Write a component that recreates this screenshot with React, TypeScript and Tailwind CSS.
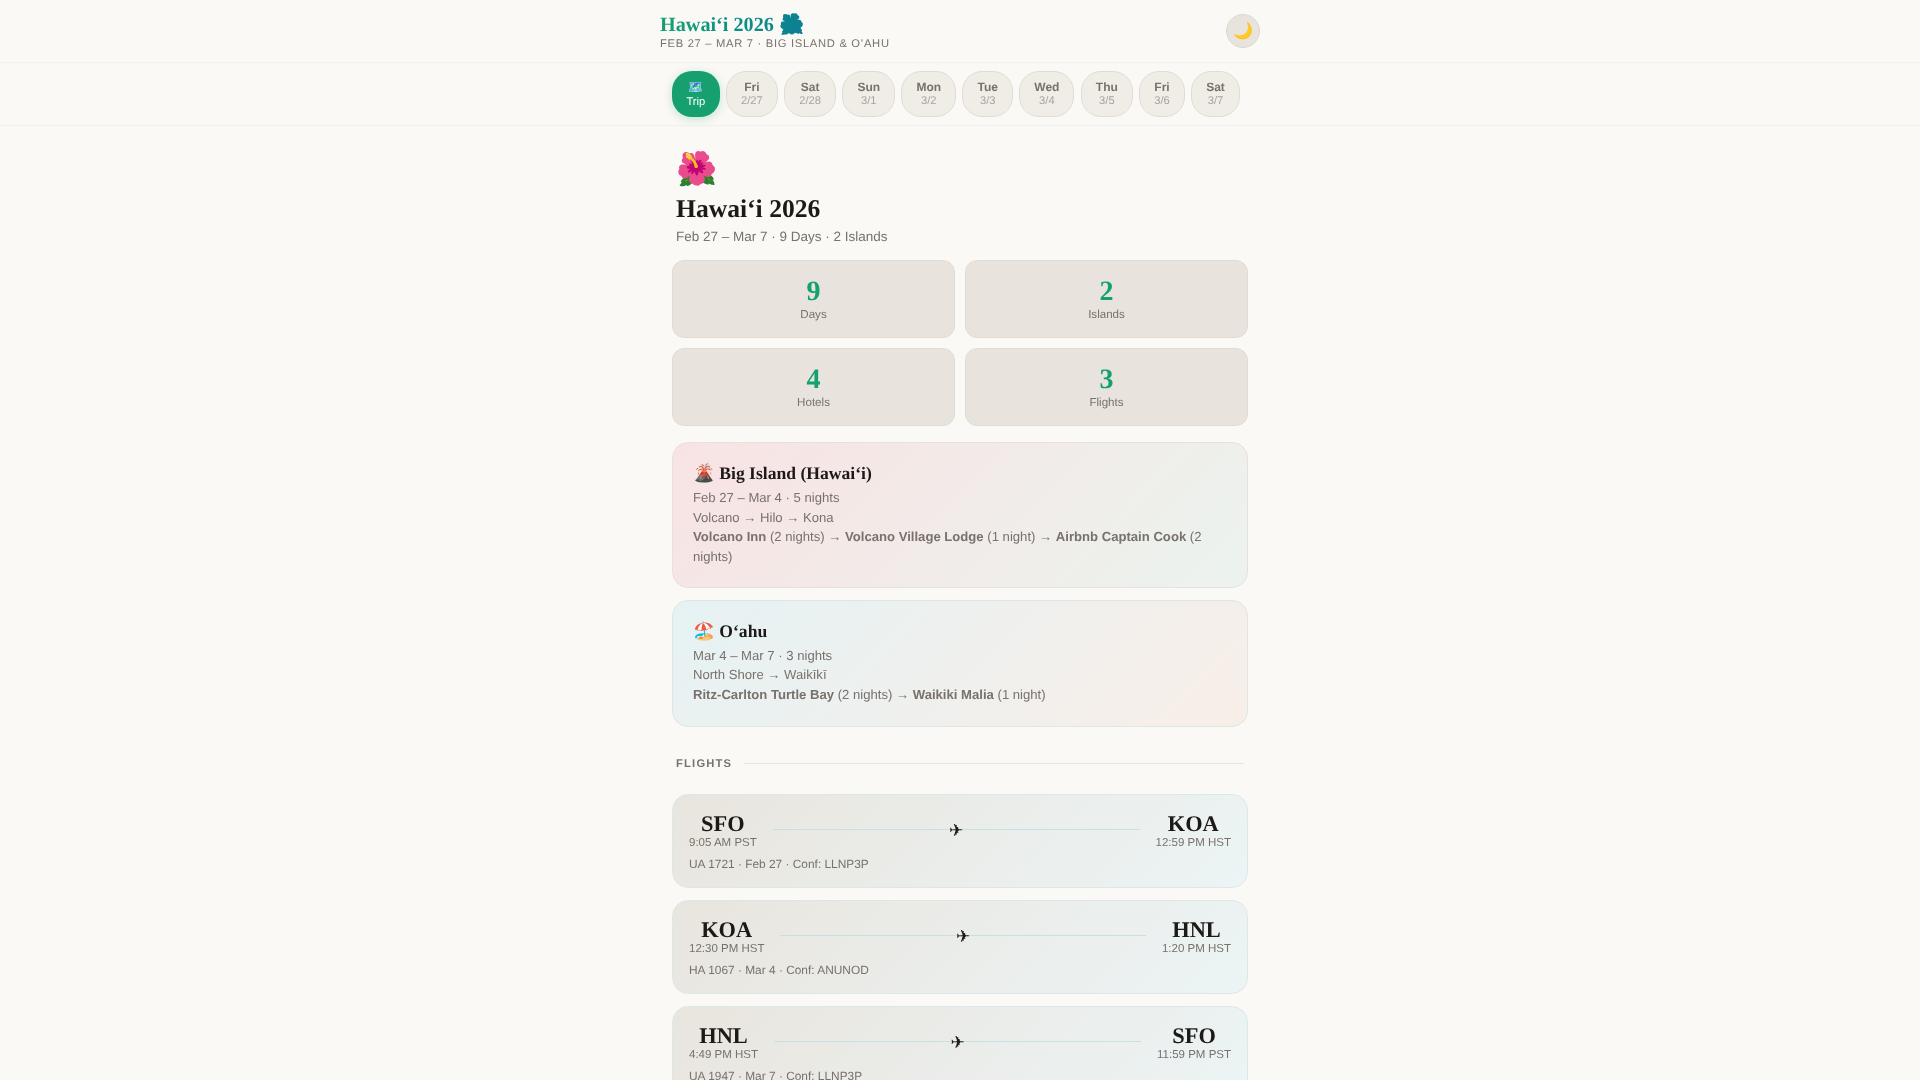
import React from 'react';

const days = [
  { name: 'Fri', date: '2/27' },
  { name: 'Sat', date: '2/28' },
  { name: 'Sun', date: '3/1' },
  { name: 'Mon', date: '3/2' },
  { name: 'Tue', date: '3/3' },
  { name: 'Wed', date: '3/4' },
  { name: 'Thu', date: '3/5' },
  { name: 'Fri', date: '3/6' },
  { name: 'Sat', date: '3/7' },
];

const stats = [
  { value: '9', label: 'Days' },
  { value: '2', label: 'Islands' },
  { value: '4', label: 'Hotels' },
  { value: '3', label: 'Flights' },
];

const flights = [
  { from: 'SFO', fromTime: '9:05 AM PST', to: 'KOA', toTime: '12:59 PM HST', info: 'UA 1721 · Feb 27 · Conf: LLNP3P' },
  { from: 'KOA', fromTime: '12:30 PM HST', to: 'HNL', toTime: '1:20 PM HST', info: 'HA 1067 · Mar 4 · Conf: ANUNOD' },
  { from: 'HNL', fromTime: '4:49 PM HST', to: 'SFO', toTime: '11:59 PM PST', info: 'UA 1947 · Mar 7 · Conf: LLNP3P' },
];

const serif = "font-['Liberation_Serif',serif]";

const App = (): React.JSX.Element => {
  return (
    <div className="h-[1080px] overflow-hidden bg-[#faf9f5] font-['Liberation_Sans',sans-serif] text-[#1c1917] [text-rendering:geometricPrecision]">
      <div className="[will-change:transform]">
        <header className="border-b border-[#eff2ec]">
          <div className="mx-auto flex h-[62px] w-[600px] items-center justify-between">
            <div>
              <h1 className={`${serif} w-fit bg-gradient-to-r from-[#16a070] to-[#0e7f94] bg-clip-text text-[20.2px] leading-[26px] font-bold text-transparent`}>
                Hawaiʻi 2026 🌺
              </h1>
              <p className="text-[11.2px] leading-[13px] tracking-[0.7px] text-[#78716c]">
                FEB 27 – MAR 7 · BIG ISLAND &amp; OʻAHU
              </p>
            </div>
            <button className="flex h-[34px] w-[34px] items-center justify-center rounded-full border border-[#dcd8d0] bg-[#e8e4dd] text-[16px]">
              🌙
            </button>
          </div>
        </header>

        <nav className="border-b border-[#eff2ec]">
          <div className="mx-auto flex h-[62px] w-[600px] items-center gap-[6.4px] px-3">
            <div className="flex h-[46px] flex-col items-center justify-center rounded-[20px] bg-[#16a070] px-[14.4px] text-white shadow-[0_2px_10px_rgba(22,160,112,0.25)]">
              <span className="text-[12px] leading-[15px]">🗺️</span>
              <span className="text-[11.2px] leading-[14px]">Trip</span>
            </div>
            {days.map((day) => (
              <div
                key={day.date}
                className="flex h-[46px] flex-col items-center justify-center rounded-[20px] border border-[#e0dcd4] bg-[#f0ede7] px-[14px]"
              >
                <span className="text-[12px] leading-[15px] font-bold text-[#78716c]">{day.name}</span>
                <span className="text-[11.2px] leading-[13px] text-[#a8a29e]">{day.date}</span>
              </div>
            ))}
          </div>
        </nav>

        <main className="mx-auto w-[600px] px-3">
          <section className="mt-[24px] px-1">
            <div className="text-[33px] leading-[38px]">🌺</div>
            <h2 className={`${serif} mt-[5px] text-[25.6px] leading-[32px] font-bold`}>Hawaiʻi 2026</h2>
            <p className="mt-[2px] text-[13.5px] leading-[20px] text-[#78716c]">Feb 27 – Mar 7 · 9 Days · 2 Islands</p>
          </section>

          <section className="mt-[13px] grid grid-cols-2 gap-[10px]">
            {stats.map((stat) => (
              <div key={stat.label} className="flex h-[78px] flex-col items-center justify-center rounded-[12px] border border-[#e0dcd4] bg-[#e8e4dd]">
                <div className={`${serif} text-[28px] leading-[32px] font-bold text-[#16a070]`}>{stat.value}</div>
                <div className="text-[11.6px] leading-[14px] text-[#78716c]">{stat.label}</div>
              </div>
            ))}
          </section>

          <section className="mt-4 flex flex-col gap-3">
            <div className="rounded-[16px] border border-[#e8e0dc] bg-[linear-gradient(135deg,#f8e3e3,#ebf3ee)] px-5 pt-[18px] pb-[20px]">
              <h3 className={`${serif} text-[17.6px] leading-[24px] font-bold`}>🌋 Big Island (Hawaiʻi)</h3>
              <div className="mt-[3px] text-[13.12px] leading-[19.68px] text-[#78716c]">
                <p>Feb 27 – Mar 4 · 5 nights</p>
                <p>Volcano → Hilo → Kona</p>
                <p>
                  <strong>Volcano Inn</strong> (2 nights) → <strong>Volcano Village Lodge</strong> (1 night) → <strong>Airbnb Captain Cook</strong> (2 nights)
                </p>
              </div>
            </div>
            <div className="rounded-[16px] border border-[#dfe5e4] bg-[linear-gradient(135deg,#e6f2f4,#f8eee8)] px-5 pt-[18px] pb-[21px]">
              <h3 className={`${serif} text-[17.6px] leading-[24px] font-bold`}>🏖️ Oʻahu</h3>
              <div className="mt-[3px] text-[13.12px] leading-[19.68px] text-[#78716c]">
                <p>Mar 4 – Mar 7 · 3 nights</p>
                <p>North Shore → Waikīkī</p>
                <p>
                  <strong>Ritz-Carlton Turtle Bay</strong> (2 nights) → <strong>Waikiki Malia</strong> (1 night)
                </p>
              </div>
            </div>
          </section>

          <section className="mt-[30px] flex items-center gap-3 px-1">
            <span className="text-[11.2px] leading-[14px] font-bold tracking-[1.2px] text-[#78716c]">FLIGHTS</span>
            <span className="h-px flex-1 bg-[#e8e4dd]" />
          </section>

          <section className="mt-[23px] flex flex-col gap-3">
            {flights.map((flight) => (
              <div key={flight.info} className="h-[94px] rounded-[16px] border border-[#dce8e8] bg-[linear-gradient(135deg,#e9e5de,#ecf4f5)] px-4 pt-[17px]">
                <div className="flex items-center gap-4">
                  <div className="text-center">
                    <div className={`${serif} text-[22.4px] leading-[24px] font-bold`}>{flight.from}</div>
                    <div className="text-[11.5px] leading-[14px] text-[#78716c]">{flight.fromTime}</div>
                  </div>
                  <div className="relative -top-px h-px flex-1 bg-[#c8e0e4]">
                    <span className="absolute top-1/2 left-1/2 -translate-x-1/2 -translate-y-[45%] text-[17px] leading-none">✈</span>
                  </div>
                  <div className="text-center">
                    <div className={`${serif} text-[22.4px] leading-[24px] font-bold`}>{flight.to}</div>
                    <div className="text-[11.5px] leading-[14px] text-[#78716c]">{flight.toTime}</div>
                  </div>
                </div>
                <p className="mt-[6px] text-[11.9px] leading-[16px] text-[#78716c]">{flight.info}</p>
              </div>
            ))}
          </section>
        </main>
      </div>
    </div>
  );
};

export default App;
